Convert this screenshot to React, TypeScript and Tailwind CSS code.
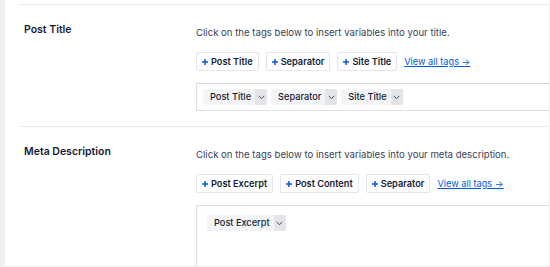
// Smart tags editor (Post Title / Meta Description)

import React from 'react'

type SectionProps = {
  title: string
  hint: string
  buttons: string[]
  chips: string[]
  multiline?: boolean
}

const Chevron = () => (
  <svg width="7" height="5" viewBox="0 0 7 5" fill="none">
    <path d="M1 1.2 3.5 3.7 6 1.2" stroke="#434960" strokeWidth="1" strokeLinecap="round" strokeLinejoin="round" />
  </svg>
)

const Plus = () => (
  <svg width="6" height="6" viewBox="0 0 6 6" fill="none">
    <path d="M3 0v6M0 3h6" stroke="#005ae0" strokeWidth="1.5" />
  </svg>
)

const Chip = ({ label }: { label: string }) => (
  <div className="flex h-[16px] items-stretch rounded-[2px] bg-[#f3f4f5] text-[9.2px] font-medium leading-[16px] text-[#141b38]">
    <span className="pl-[7px] pr-[4px]">{label}</span>
    <span className="flex w-[12px] items-center justify-center rounded-r-[2px] bg-[#e4e5e9]">
      <Chevron />
    </span>
  </div>
)

const TagButton = ({ label }: { label: string }) => (
  <button className="flex h-[19px] items-center gap-[3px] rounded-[2px] border border-[#e3e5e9] bg-white px-[5px] text-[9.2px] font-semibold leading-none text-[#141b38]">
    <Plus />
    <span>{label}</span>
  </button>
)

function Section({ title, hint, buttons, chips, multiline }: SectionProps) {
  return (
    <div className="flex border-t border-[#e8e8eb] pt-[18px] pb-[15px]">
      {/* Etiket */}
      <div className="w-[176px] shrink-0 pl-[4px] text-[10.5px] font-semibold leading-[14px] text-[#141b38]">
        {title}
      </div>

      {/* Sağ kolon */}
      <div className="w-[400px] shrink-0 pt-[3px]">
        <p className="text-[9.6px] leading-[13px] text-[#3a3f55]">{hint}</p>

        <div className="mt-[13px] flex items-center gap-[7px]">
          {buttons.map((b) => (
            <TagButton key={b} label={b} />
          ))}
          <a href="#" className="text-[9.2px] text-[#005ae0] underline">
            View all tags →
          </a>
        </div>

        <div
          className={
            multiline
              ? 'mt-[12px] h-[90px] border border-[#dcdde1] px-[10px] pt-[9px]'
              : 'mt-[12px] border border-[#dcdde1] border-t-[#d2d3d8] px-[6px] py-[5px]'
          }
        >
          <div className="flex gap-[4px]">
            {chips.map((c) => (
              <Chip key={c} label={c} />
            ))}
          </div>
        </div>
      </div>
    </div>
  )
}

export default function App() {
  return (
    <div className="h-[267px] w-[550px] overflow-hidden bg-[#f0f0f2] pb-[1px] pl-[5px] pr-[1px] font-['Inter',sans-serif]">
      <div className="h-full overflow-hidden bg-white pl-[15px] pt-[4px]">
        <Section
          title="Post Title"
          hint="Click on the tags below to insert variables into your title."
          buttons={['Post Title', 'Separator', 'Site Title']}
          chips={['Post Title', 'Separator', 'Site Title']}
        />
        <Section
          title="Meta Description"
          hint="Click on the tags below to insert variables into your meta description."
          buttons={['Post Excerpt', 'Post Content', 'Separator']}
          chips={['Post Excerpt']}
          multiline
        />
      </div>
    </div>
  )
}
